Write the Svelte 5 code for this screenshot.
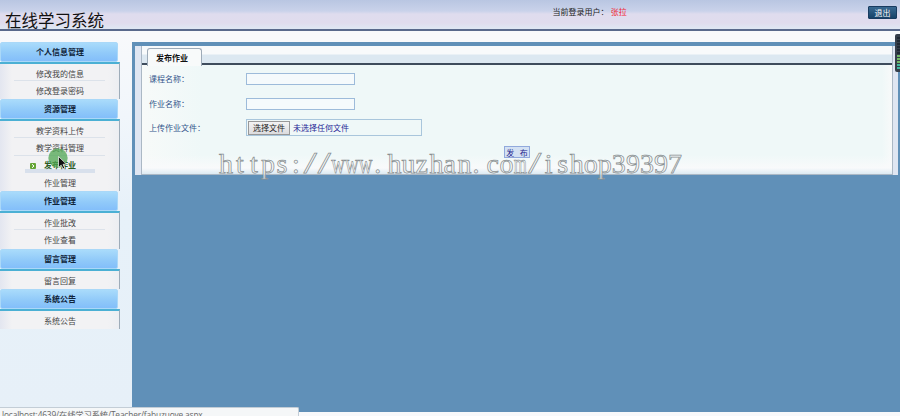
<script>
  const groups = [
    { title: '个人信息管理', items: ['修改我的信息', '修改登录密码'], body: 35 },
    { title: '资源管理', items: ['教学资料上传', '教学资料管理', '发布作业', '作业管理'], body: 70 },
    { title: '作业管理', items: ['作业批改', '作业查看'], body: 36 },
    { title: '留言管理', items: ['留言回复'], body: 18 },
    { title: '系统公告', items: ['系统公告'], body: 18 }
  ];
  const active = '发布作业';
  const cell = 14.03;
  const start = 219;
  const runs = [
    { at: 0, text: 'https:' },
    { at: 6, text: '//', slash: true },
    { at: 8, text: 'www', fit: true },
    { at: 11, text: '.huzhan.co' },
    { at: 21, text: 'm', fit: true },
    { at: 22, text: '/', slash: true },
    { at: 23, text: 'ishop39397' }
  ];
  const offset = { t: 3, s: 1.5, ':': 3, '.': 1, i: 3, c: 1, '/': -1 };
  const positions = (run) =>
    [...run.text].map((c, i) => (start + (run.at + i) * cell + (offset[c] ?? 0)).toFixed(1)).join(' ');
</script>

<div class="page">
  <header>
    <h1>在线学习系统</h1>
    <div class="user">当前登录用户： <span>张拉</span></div>
    <button class="logout">退出</button>
  </header>

  <div class="body">
    <nav>
      {#each groups as group}
        <section>
          <h2>{group.title}</h2>
          <ul style="height: {group.body}px">
            {#each group.items as item}
              <li class:active={item === active}>
                {#if item === active}
                  <svg class="bullet" width="6" height="6" viewBox="0 0 6 6">
                    <rect width="6" height="6" rx="1" fill="#65a536" />
                    <path d="M2 1.2 4 3 2 4.8" fill="none" stroke="#fff" />
                  </svg>
                {/if}
                {item}
              </li>
            {/each}
          </ul>
        </section>
      {/each}
    </nav>

    <main>
      <div class="panel">
        <div class="frame">
          <div class="tabs"><div class="tab">发布作业</div></div>
          <form>
            <div class="row"><label for="course">课程名称：</label><input id="course" /></div>
            <div class="row"><label for="work">作业名称：</label><input id="work" /></div>
            <div class="row">
              <span class="label">上传作业文件：</span>
              <div class="file"><button type="button">选择文件</button><span>未选择任何文件</span></div>
            </div>
            <button type="button" class="publish">发&nbsp; 布</button>
          </form>
        </div>
      </div>
    </main>
  </div>

  <div class="status">localhost:4639/在线学习系统/Teacher/fabuzuoye.aspx</div>

  <div class="meter">
    {#each Array(11) as _, i}
      <i class:lit={i > 5} class:teal={i > 8}></i>
    {/each}
  </div>

  <svg class="pointer" width="24" height="24" viewBox="0 0 24 24">
    <circle cx="10" cy="10" r="9.7" fill="#4fa552" fill-opacity=".75" />
    <path d="M10.5 8.5v11l2.7-2.3 1.8 3.7 1.8-.9-1.8-3.6 3.3-.4z" fill="#111" stroke="#fff" stroke-width=".7" />
  </svg>

  <svg class="watermark" width="900" height="416" viewBox="0 0 900 416">
    {#each runs as run}
      {#if run.fit}
        <text x={start + run.at * cell} y="172.5" textLength={run.text.length * cell - 1} lengthAdjust="spacingAndGlyphs">{run.text}</text>
      {:else}
        <text class:slash={run.slash} x={positions(run)} y="172.5">{run.text}</text>
      {/if}
    {/each}
  </svg>
</div>

<style>
  :global(body) { margin: 0; }
  .page {
    position: relative;
    width: 900px;
    height: 416px;
    overflow: hidden;
    background: #f8f9fb;
    font-family: "Liberation Sans", "Noto Sans CJK SC", sans-serif;
    font-size: 8px;
    display: flex;
    flex-direction: column;
  }
  header {
    box-sizing: border-box;
    height: 31px;
    flex: none;
    display: flex;
    align-items: flex-start;
    border-bottom: 2px solid #59698b;
    background: linear-gradient(#b9c6e2 0, #c9d2ea 11px, #dfdcee 14px, #e0dced 23px, #dfe6f2 28px);
  }
  h1 {
    width: 548px;
    margin: 10px 0 0 5px;
    font-size: 16.5px;
    line-height: 22px;
    font-weight: 400;
    color: #111;
  }
  .user { width: 315px; padding-top: 7px; line-height: 12px; color: #222; white-space: nowrap; text-indent: -0.5px; }
  .user span { color: #f22233; }
  .logout {
    width: 29px;
    height: 13px;
    margin-top: 6px;
    padding: 0;
    border: 1px solid #183b60;
    border-radius: 1px;
    background: linear-gradient(#386991, #164268);
    color: #fff;
    font: 8px/10px "Noto Sans CJK SC", sans-serif;
  }
  .body { flex: 1; display: flex; min-height: 0; padding-bottom: 4px; }
  nav {
    box-sizing: border-box;
    width: 132px;
    height: 385px;
    padding-top: 11px;
    background: linear-gradient(#f8f9fb 0, #f1f6fb 85px, #e7f1f9 180px, #e7f0f8 100%);
  }
  section { width: 120px; }
  h2 {
    box-sizing: border-box;
    width: 118px;
    height: 20px;
    margin: 0;
    padding-left: 2px;
    border: 1px solid #aad8f8;
    border-radius: 2px;
    background: linear-gradient(#a9dbfb, #91caf9 55%, #83befa);
    font-size: 8px;
    line-height: 19px;
    text-align: center;
    color: #10243a;
  }
  ul {
    box-sizing: content-box;
    margin: 0;
    padding: 0;
    list-style: none;
    border-top: 2.5px solid #4bb0d4;
    border-right: 1px solid #9eacb9;
    width: 119px;
    background: linear-gradient(90deg, #e3e6f0, #f2f2f4 12px, #f2f2f4 108px, #eceef2);
    overflow: hidden;
  }
  li {
    position: relative;
    box-sizing: border-box;
    height: 17.3px;
    margin: 0 14px;
    padding-left: 1px;
    border-bottom: 1px solid #dce2ea;
    line-height: 21px;
    text-align: center;
    color: #444;
  }
  li:last-child { border-bottom: 0; }
  li.active {
    font-weight: 700;
    color: #2c5c26;
    border-bottom: 0;
    background: linear-gradient(transparent 13px, #d8e0ec 13px) center / 70px 100% no-repeat;
    line-height: 20px;
  }
  .bullet { position: absolute; left: 16px; top: 7px; }
  main { flex: 1; background: linear-gradient(#f8f9fb 11px, #6090b8 11px); padding-top: 11px; }
  .panel {
    box-sizing: border-box;
    height: 133px;
    border: solid #6090b8;
    border-width: 4px 2px 0 3px;
    background: #dfe6f2;
    padding: 0 5px 0 6px;
  }
  .frame {
    box-sizing: border-box;
    height: 129px;
    border: solid #abb8c5;
    border-width: 0 1px 1px;
    background: linear-gradient(90deg, #f7faf9, #eff8f8 60px, #eff8f8 740px, #f8fafa);
  }
  .tabs {
    box-sizing: border-box;
    height: 19px;
    padding: 2px 0 0 5px;
    border-bottom: 2px solid #3e4c5c;
    background: linear-gradient(#f8fafb 45%, #dce8f1 55%);
  }
  .tab {
    box-sizing: border-box;
    position: relative;
    width: 55px;
    height: 18px;
    border: 1px solid #9eabb8;
    border-bottom: 0;
    border-radius: 3px 3px 0 0;
    background: #f8fafa;
    font-weight: 700;
    text-align: center;
    line-height: 19px;
    padding-right: 5px;
    color: #111;
  }
  form { height: 109px; display: flex; flex-direction: column; background: linear-gradient(transparent 90px, #f9fafb 103px, #dceaf2); }
  .row { flex: none; height: 24.5px; padding: 3px 0 0 7px; box-sizing: border-box; display: flex; color: #32558b; }
  label, .label { width: 97px; line-height: 23px; }
  input {
    box-sizing: border-box;
    width: 109px;
    height: 12px;
    margin: 5px 0 0;
    padding: 0;
    border: 1px solid #9dbbda;
    background: #f5fafc;
  }
  .file {
    box-sizing: border-box;
    width: 176px;
    height: 17px;
    margin-top: 2px;
    padding: 0 1px;
    border: 1px solid #a9c6dc;
    display: flex;
    align-items: center;
    gap: 3px;
    color: #262696;
  }
  .file button {
    width: 42px;
    height: 14px;
    padding: 0;
    border: 1px solid #999;
    background: linear-gradient(#f3f3f3, #dcdcdf);
    color: #222;
    font: inherit;
    line-height: 13px;
  }
  .publish {
    width: 26px;
    height: 12px;
    margin: 7.5px 0 0 362px;
    padding: 0;
    border: 1px solid #91a9dc;
    background: #d3e1f3;
    color: #22228c;
    font: 8px/9px "Noto Sans CJK SC", sans-serif;
    white-space: nowrap;
    word-spacing: 1px;
  }
  .status {
    position: absolute;
    left: 0;
    top: 407px;
    width: 296px;
    height: 14px;
    padding-left: 2px;
    border-top: 1px solid #c3cdd6;
    border-right: 1px solid #c3cdd6;
    border-top-right-radius: 2px;
    background: #f5f7f8;
    color: #666;
    font: 8.3px/13px "Open Sans", "Noto Sans CJK SC", sans-serif;
    letter-spacing: -0.13px;
    white-space: nowrap;
  }
  .meter {
    position: absolute;
    left: 895px;
    top: 34px;
    width: 5px;
    height: 38px;
    box-sizing: border-box;
    padding: 3px 0 0 2px;
    border-radius: 2px 0 0 2px;
    background: #363f4b;
  }
  .meter i { display: block; height: 2px; margin-bottom: 1px; background: #202832; }
  .meter i.lit { background: #72b967; }
  .meter i.teal { background: #40b9a0; }
  .pointer { position: absolute; left: 48px; top: 148px; }
  .watermark { position: absolute; left: 0; top: 0; pointer-events: none; }
  .watermark text {
    font: 28px "Liberation Serif", serif;
    fill: #f6f8f8;
    fill-opacity: .7;
    stroke: #8a9092;
    stroke-width: .75;
  }
  .watermark text.slash { font: 27px "Liberation Mono", monospace; }
</style>
